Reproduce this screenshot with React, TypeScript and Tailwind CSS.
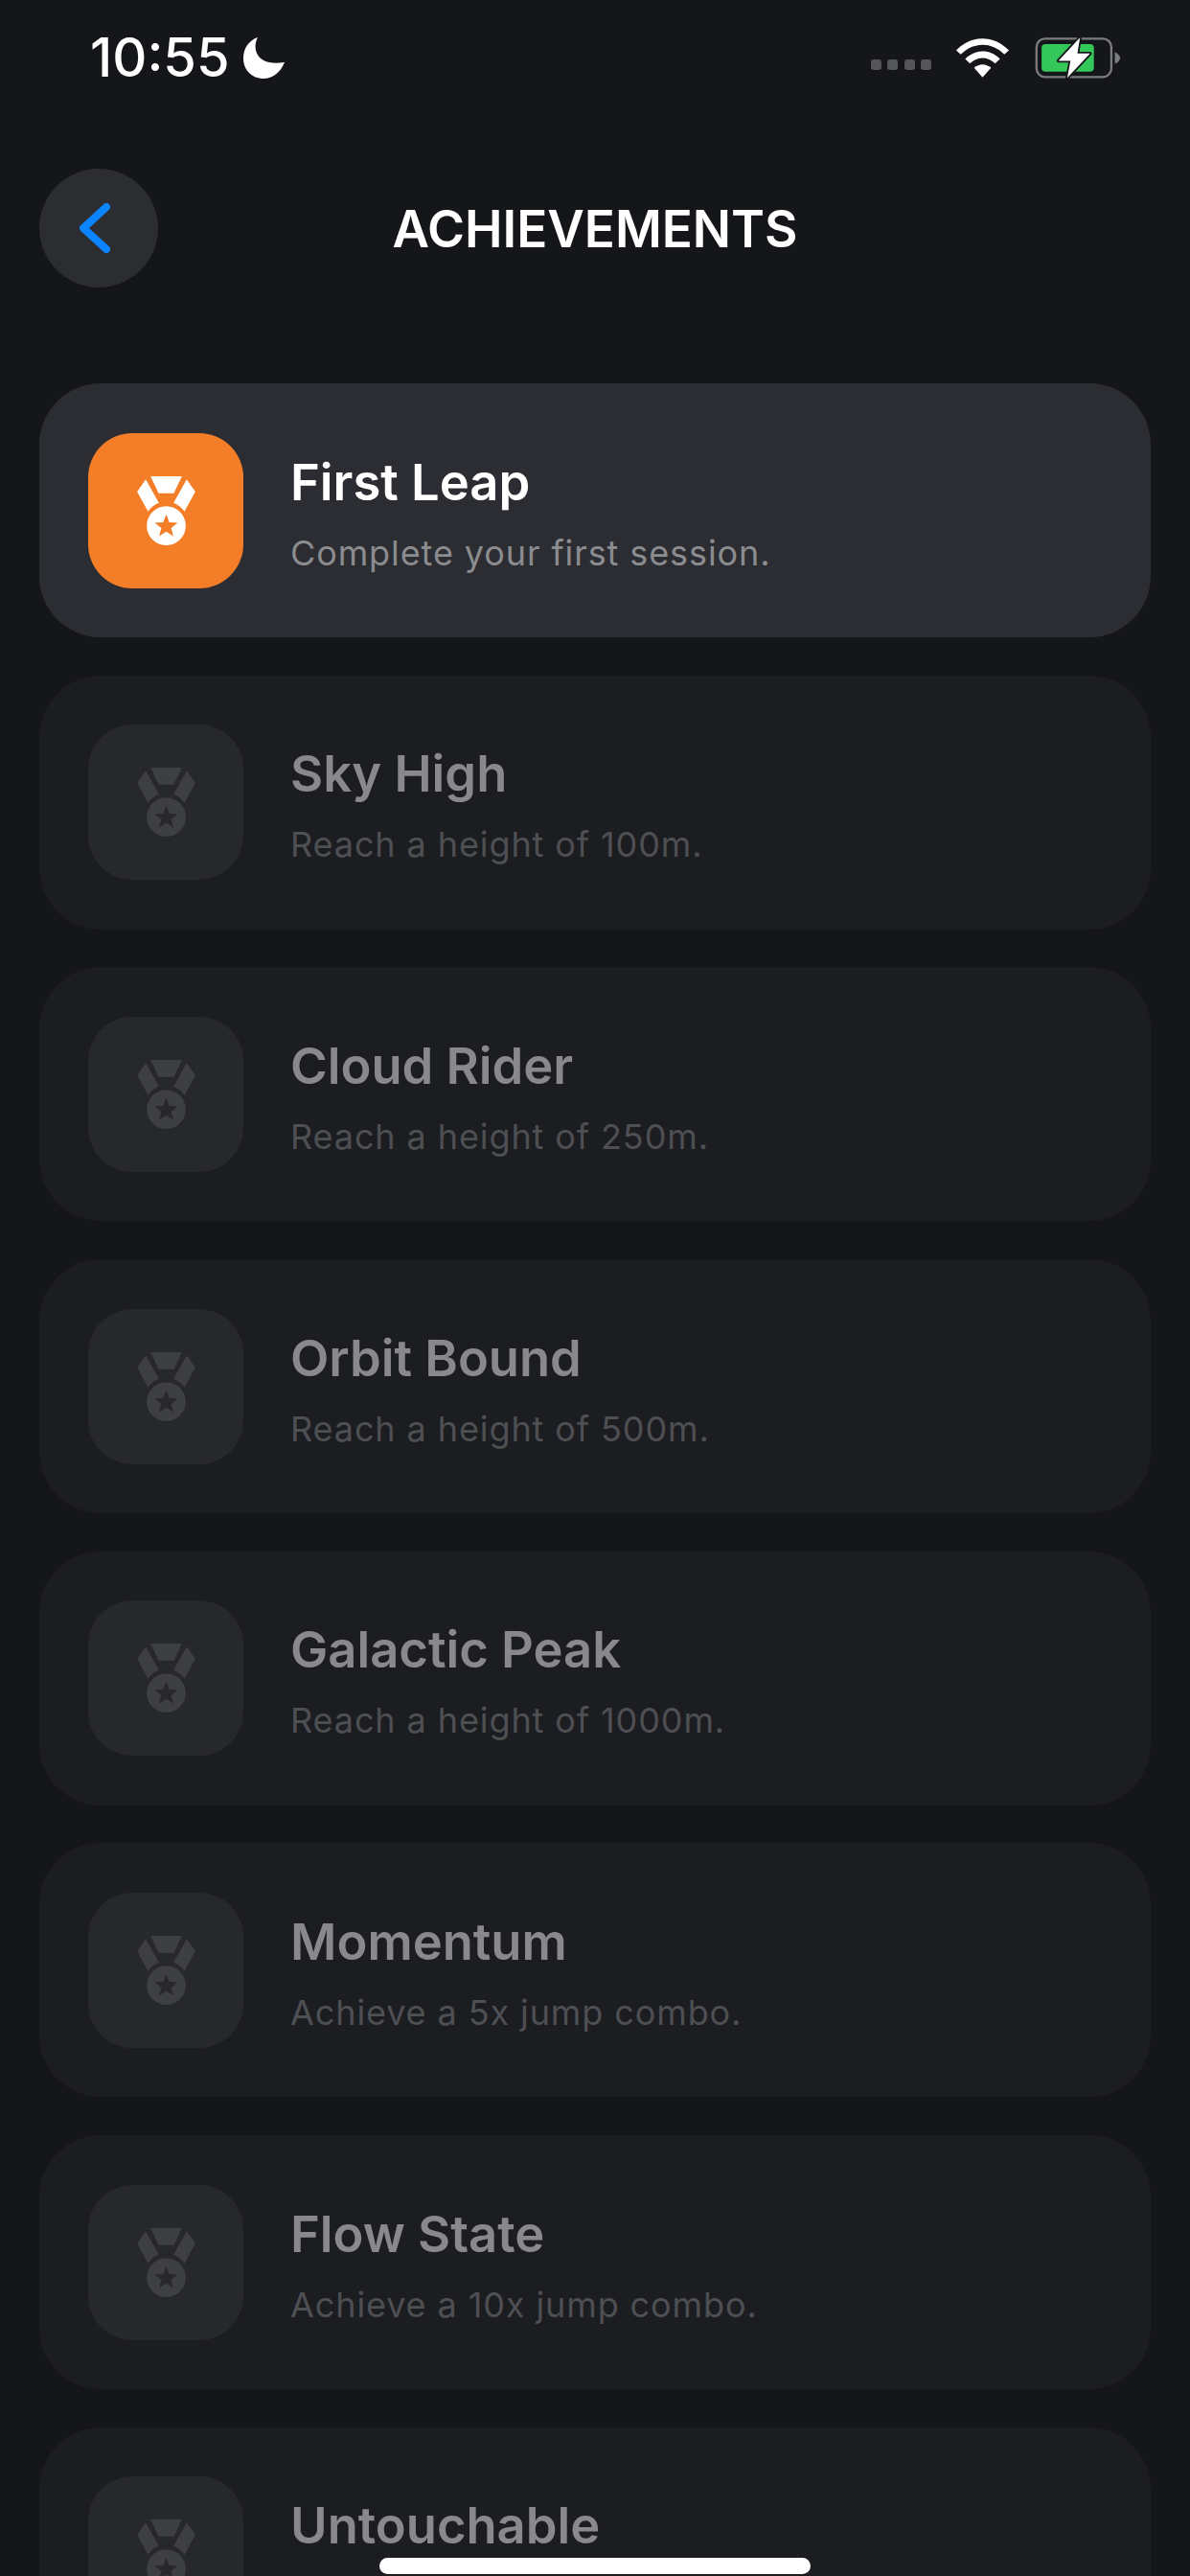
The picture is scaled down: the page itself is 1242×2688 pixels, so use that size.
const achievements = [
  { title: 'First Leap', desc: 'Complete your first session.', unlocked: true },
  { title: 'Sky High', desc: 'Reach a height of 100m.' },
  { title: 'Cloud Rider', desc: 'Reach a height of 250m.' },
  { title: 'Orbit Bound', desc: 'Reach a height of 500m.' },
  { title: 'Galactic Peak', desc: 'Reach a height of 1000m.' },
  { title: 'Momentum', desc: 'Achieve a 5x jump combo.' },
  { title: 'Flow State', desc: 'Achieve a 10x jump combo.' },
  { title: 'Untouchable', desc: '' },
];

function starPoints(cx: number, cy: number, outer: number, inner: number) {
  const pts: string[] = [];
  for (let i = 0; i < 10; i++) {
    const r = i % 2 === 0 ? outer : inner;
    const a = (Math.PI / 5) * i - Math.PI / 2;
    pts.push(`${i === 0 ? 'M' : 'L'}${(cx + r * Math.cos(a)).toFixed(1)} ${(cy + r * Math.sin(a)).toFixed(1)}`);
  }
  return pts.join(' ') + ' Z';
}

function Medal({ className }: { className: string }) {
  return (
    <svg viewBox="0 0 182 216" className={`w-[61px] h-[72px] ${className}`} fill="currentColor">
      <path d="M42 0 H140 L115 53 H67 Z" />
      <path d="M27 10 L68 83 Q48 90 34 110 L0 48 Z" />
      <path d="M155 10 L114 83 Q134 90 148 110 L182 48 Z" />
      <path fillRule="evenodd" d={`M91 94 a61 61 0 1 0 0.01 0 Z ${starPoints(91, 157, 38, 16)}`} />
    </svg>
  );
}

function StatusBar() {
  return (
    <div className="flex items-center justify-between h-[120px] pl-[94px] pr-[71px]">
      <div className="flex items-center gap-[14px]">
        <span className="text-[56px] leading-none font-medium text-white">10:55</span>
        <svg viewBox="0 0 43 43" className="w-[43px] h-[43px] text-white" fill="currentColor">
          <path d="M15 0 C9 11 13 31 43 26 C39 36 31 43 21 43 C9 43 0 34 0 22 C0 11 6 3 15 0 Z" />
        </svg>
      </div>
      <div className="flex items-center gap-[13px]">
        <div className="flex gap-[6.5px] mt-[14px] mr-[13px]">
          {[0, 1, 2, 3].map((i) => (
            <div key={i} className="w-[11px] h-[11px] rounded-[3px] bg-[#55565a]" />
          ))}
        </div>
        <svg viewBox="0 0 165 122" className="w-[55px] h-[41px] text-white" fill="currentColor">
          <path d="M0 37 C48 -12 117 -12 165 37 L151 50 C110 10 55 10 14 50 Z" />
          <path d="M28 64 C60 32 105 32 137 64 L122 78 C97 55 68 55 43 78 Z" />
          <path d="M56 92 C72 78 93 78 109 92 L82.5 122 Z" />
        </svg>
        <svg viewBox="650 105 280 145" className="w-[93px] h-[48px] ml-[12px]">
          <rect x="661" y="118" width="236" height="121" rx="27" fill="none" stroke="#7b7c7e" strokeWidth="7" />
          <rect x="677" y="135" width="165" height="87" rx="12" fill="#34c759" />
          <path d="M908 160 C920 165 928 178 924 182 C922 190 916 195 908 197 Z" fill="#7b7c7e" />
          <path
            d="M798 115 L730 188 H768 L758 242 L830 165 H790 Z"
            fill="#fff"
            stroke="#15161a"
            strokeWidth="11"
            strokeLinejoin="round"
            paintOrder="stroke"
          />
        </svg>
      </div>
    </div>
  );
}

function Header() {
  return (
    <div className="relative flex items-center justify-center h-[124px] mt-[56px] mx-[41px] pt-[2px]">
      <button className="absolute left-0 top-0 w-[124px] h-[124px] rounded-full bg-[#2c2d31] flex items-center justify-center">
        <svg viewBox="0 0 32 52" className="w-[32px] h-[52px] mr-[8px]" fill="none" stroke="#0a84ff" strokeWidth="8" strokeLinecap="round" strokeLinejoin="round">
          <path d="M28 4 L4 26 L28 48" />
        </svg>
      </button>
      <h1 className="text-[53px] leading-none font-semibold text-white">ACHIEVEMENTS</h1>
    </div>
  );
}

function AchievementRow({ title, desc, unlocked }: { title: string; desc: string; unlocked?: boolean }) {
  return (
    <div className={`flex items-center shrink-0 h-[265px] rounded-[64px] pl-[51px] ${unlocked ? 'bg-[#2c2d32]' : 'bg-[#1c1d21]'}`}>
      <div className={`flex items-center justify-center w-[162px] h-[162px] rounded-[46px] ${unlocked ? 'bg-[#f37e27]' : 'bg-[#27282c]'}`}>
        <Medal className={unlocked ? 'text-white' : 'text-[#3e3f42]'} />
      </div>
      <div className="flex flex-col ml-[49px] pt-[8px] gap-[24px]">
        <span className={`text-[52.5px] leading-[56px] font-semibold ${unlocked ? 'text-white' : 'text-[#89898c]'}`}>{title}</span>
        <span className={`min-h-[44px] text-[36px] leading-[44px] tracking-[0.9px] ${unlocked ? 'text-[#8b8c8f]' : 'text-[#4e4f53]'}`}>{desc}</span>
      </div>
    </div>
  );
}

export default function App() {
  return (
    <div className="relative w-[1242px] h-[2688px] overflow-hidden bg-[#15161a] font-['Inter',sans-serif]">
      <StatusBar />
      <Header />
      <div className="flex flex-col gap-[39.7px] mx-[41px] mt-[100px]">
        {achievements.map((a) => (
          <AchievementRow key={a.title} {...a} />
        ))}
      </div>
      <div className="absolute left-[396px] bottom-[2px] w-[450px] h-[17px] rounded-full bg-white" />
    </div>
  );
}
